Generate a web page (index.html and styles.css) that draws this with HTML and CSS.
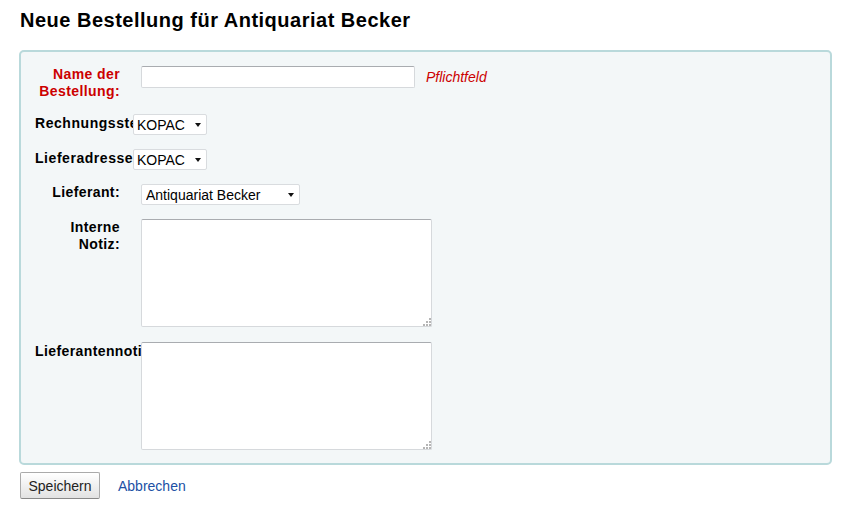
FILE: index.html
```html
<!DOCTYPE html>
<html lang="de">
<head>
    <meta charset="UTF-8">
    <meta name="viewport" content="width=device-width, initial-scale=1.0">
    <title>Neue Bestellung</title>
    <link rel="stylesheet" href="styles.css">
</head>
<body>
    <h1>Neue Bestellung für Antiquariat Becker</h1>
    <form class="basket-form">
        <fieldset class="rows">
            <div class="row">
                <label for="basketname" class="required">Name der Bestellung:</label>
                <input type="text" id="basketname" class="text-input">
                <span class="required-note">Pflichtfeld</span>
            </div>
            <div class="row">
                <label for="billingplace" class="label-clip label-short">Rechnungsstelle:</label>
                <span class="select-wrap">
                    <select id="billingplace" class="select-small"><option>KOPAC</option></select>
                </span>
            </div>
            <div class="row">
                <label for="deliveryplace" class="label-clip label-short">Lieferadresse:</label>
                <span class="select-wrap">
                    <select id="deliveryplace" class="select-small"><option>KOPAC</option></select>
                </span>
            </div>
            <div class="row">
                <label for="booksellerid">Lieferant:</label>
                <span class="select-wrap">
                    <select id="booksellerid" class="select-wide"><option>Antiquariat Becker</option></select>
                </span>
            </div>
            <div class="row row-note">
                <label for="basketnote">Interne Notiz:</label>
                <textarea id="basketnote"></textarea>
            </div>
            <div class="row">
                <label for="basketbooksellernote" class="label-clip">Lieferantennotiz:</label>
                <textarea id="basketbooksellernote"></textarea>
            </div>
        </fieldset>
        <div class="actions">
            <button type="button" class="btn">Speichern</button>
            <a href="#" class="cancel">Abbrechen</a>
        </div>
    </form>
</body>
</html>
```

FILE: styles.css
```css
body {
    font-family: "Liberation Sans", Arial, sans-serif;
    font-size: 14px;
    color: #000;
    margin: 0;
    padding: 0 15px 0 19px;
}
h1 {
    font-size: 20px;
    line-height: 24px;
    font-weight: bold;
    letter-spacing: 0.5px;
    margin: 8px 0 18px 1px;
}
fieldset.rows {
    margin: 0;
    padding: 14px 0 13px 14px;
    width: 795px;
    border: 2px solid #b9d9db;
    border-radius: 5px;
    background-color: #f3f7f8;
    display: flex;
    flex-direction: column;
    gap: 14px;
}
.row {
    display: flex;
    align-items: flex-start;
}
.row-note {
    margin-bottom: 1px;
}
.row label {
    width: 85px;
    margin-right: 21px;
    font-weight: bold;
    letter-spacing: 0.4px;
    text-align: right;
    line-height: 17px;
    flex-shrink: 0;
}
.row label.required {
    color: #cc0000;
}
.row label.label-clip {
    text-align: left;
    white-space: nowrap;
    overflow: hidden;
    margin-right: 0;
    width: 106px;
    padding-top: 1px;
}
.row label.label-short {
    width: 98px;
    letter-spacing: 0.55px;
}
.text-input {
    width: 274px;
    height: 22px;
    box-sizing: border-box;
    border: 1px solid #d6d9dc;
    border-top-color: #a9acb0;
    border-radius: 2px;
    background: #fff;
    font: inherit;
    padding: 2px 4px;
}
.required-note {
    color: #cc0000;
    font-style: italic;
    margin-left: 11px;
    line-height: 22px;
}
.select-wrap {
    position: relative;
    display: inline-block;
}
.select-wrap::after {
    content: "";
    position: absolute;
    right: 6px;
    top: 9px;
    border-left: 3.5px solid transparent;
    border-right: 3.5px solid transparent;
    border-top: 4px solid #111;
    pointer-events: none;
}
select {
    appearance: none;
    -webkit-appearance: none;
    height: 21px;
    box-sizing: border-box;
    border: 1px solid #d9dcdf;
    border-radius: 2px;
    background: #fff;
    color: #000;
    font: inherit;
    padding: 0 0 0 3px;
    margin: 0;
}
.select-small {
    width: 74px;
}
.select-wide {
    width: 159px;
    padding-left: 4px;
}
textarea {
    width: 291px;
    height: 108px;
    box-sizing: border-box;
    border: 1px solid #d6d9dc;
    border-top-color: #a9acb0;
    border-radius: 2px;
    background: #fff;
    font: inherit;
    margin: 0;
}
textarea::-webkit-resizer {
    background:
        linear-gradient(to bottom right, #fff 68%, transparent 68%),
        radial-gradient(circle at 1px 1px, #b5b5b5 0.8px, transparent 1.1px) 1px 1px / 3px 3px,
        #fff;
}
.actions {
    display: flex;
    align-items: center;
    gap: 18px;
    margin-top: 7px;
    margin-left: 1px;
}
.btn {
    width: 80px;
    height: 27px;
    font: inherit;
    color: #222;
    background: linear-gradient(#ffffff, #e2e2e2);
    border: 1px solid #aaa;
    border-bottom-color: #888;
    border-radius: 2px;
    padding: 0;
}
.cancel {
    color: #2050a5;
    text-decoration: none;
}
```
